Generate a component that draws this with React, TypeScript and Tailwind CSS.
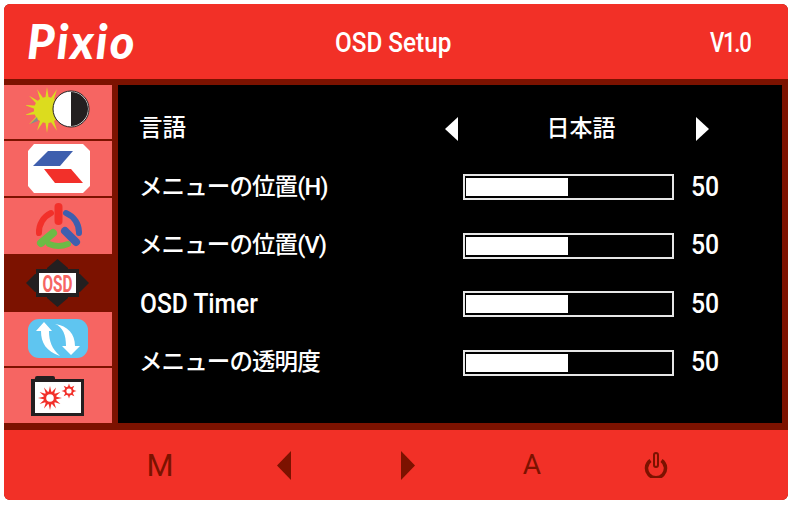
const font = { fontFamily: '"Roboto", "Noto Sans CJK JP", sans-serif' }

const rows = ["メニューの位置(H)", "メニューの位置(V)", "OSD Timer", "メニューの透明度"]

function Sun() {
  const rays = Array.from({ length: 14 }, (_, i) => i * (360 / 14))
  return (
    <svg width="64" height="50" viewBox="0 0 64 50">
      {rays.map((r) => (
        <polygon key={r} points="21,0 23,13 19,13" fill="#dcdc1e" transform={`rotate(${r} 21 23)`} />
      ))}
      <circle cx="21" cy="23" r="13" fill="#dcdc1e" />
      <polygon points="4,37 11,30 12,34" fill="#8a8a8a" />
      <circle cx="45" cy="22" r="18" fill="#fff" stroke="#231f20" strokeWidth="1" />
      <path d="M45 5a17 17 0 0 1 0 34z" fill="#231f20" />
    </svg>
  )
}

function Display() {
  return (
    <svg width="62" height="50" viewBox="0 0 62 50" className="ml-[2px]">
      <polygon points="6,0 55,0 62,7 62,42 55,49 6,49 0,42 0,7" fill="#fff" />
      <polygon points="5,22 20,7 45,7 32,22" fill="#3e5fae" />
      <polygon points="16,25 43,25 55,39 27,39" fill="#f2302a" />
    </svg>
  )
}

function ColorWheel() {
  return (
    <svg width="48" height="48" viewBox="0 0 48 48" fill="none" strokeLinecap="round">
      <path d="M5 31A21 21 0 0 1 17 11" stroke="#f2302a" strokeWidth="6" />
      <path d="M32 11A21 21 0 0 1 45 31" stroke="#3e5fae" strokeWidth="6" />
      <path d="M15 42A24 24 0 0 0 34 42" stroke="#6cbb45" strokeWidth="6" />
      <path d="M24.5 5V19" stroke="#f2302a" strokeWidth="8" />
      <path d="M7 41L19 31" stroke="#6cbb45" strokeWidth="8" />
      <path d="M31 29L42 40" stroke="#3e5fae" strokeWidth="8" />
    </svg>
  )
}

function Osd() {
  return (
    <svg width="64" height="48" viewBox="0 0 64 48">
      <polygon points="31.5,0 42,9 42,14 21,14 21,9" fill="#231f20" />
      <polygon points="31.5,48 42,39 42,34 21,34 21,39" fill="#231f20" />
      <polygon points="0,24 9,15 14,15 14,33 9,33" fill="#231f20" />
      <polygon points="63,24 54,15 49,15 49,33 54,33" fill="#231f20" />
      <rect x="10" y="10" width="43" height="28" fill="#231f20" />
      <rect x="13" y="14" width="37" height="20" fill="#fff" />
      <text x="31.5" y="32.5" textAnchor="middle" fontSize="23" fontWeight="700" fill="#f66562" textLength="30" lengthAdjust="spacingAndGlyphs" fontFamily="Roboto">OSD</text>
    </svg>
  )
}

function Refresh() {
  return (
    <svg width="60" height="40" viewBox="0 0 60 40">
      <rect width="60" height="39" rx="11" fill="#5fc5f0" />
      <path d="M13 12C13 24 18 32 32 37C24 30 21 22 21 12L24 12L16 3L8 12Z" fill="#fff" />
      <path d="M27 5C35 8 38 16 38 27L34 27L43 36L52 27L47 27C47 15 40 7 27 5Z" fill="#fff" />
    </svg>
  )
}

function Folder() {
  const big = [0, 30, 60, 90, 120, 150, 180, 210, 240, 270, 300, 330]
  const small = [0, 45, 90, 135, 180, 225, 270, 315]
  return (
    <svg width="54" height="42" viewBox="0 0 54 42">
      <path d="M3 7L4 3Q4 1 6 1H22Q24 1 24 3V7Z" fill="#231f20" />
      <rect y="4" width="53" height="37" fill="#231f20" />
      <rect x="4" y="7" width="46" height="31" fill="#fff" />
      <g fill="#f2302a">
        {big.map((r) => (
          <polygon key={r} points="19,11 21,20 17,20" transform={`rotate(${r} 19 23)`} />
        ))}
        {small.map((r) => (
          <polygon key={r} points="38,8.5 39.5,13 36.5,13" transform={`rotate(${r} 38 16)`} />
        ))}
      </g>
      <circle cx="19" cy="23" r="6.5" fill="#f2302a" />
      <circle cx="19" cy="23" r="3.8" fill="#fff" />
      <circle cx="38" cy="16" r="3.6" fill="#fff" stroke="#f2302a" strokeWidth="2" />
    </svg>
  )
}

function Tri({ dir, className }: { dir: "l" | "r"; className: string }) {
  return (
    <svg width="13" height="24" viewBox="0 0 13 24" className={className}>
      <polygon points={dir === "l" ? "13,0 13,24 0,12" : "0,0 0,24 13,12"} fill="currentColor" />
    </svg>
  )
}

function FootTri({ dir }: { dir: "l" | "r" }) {
  return (
    <svg width="14" height="29" viewBox="0 0 14 29">
      <polygon points={dir === "l" ? "14,0 14,29 0,14.5" : "0,0 0,29 14,14.5"} fill="currentColor" />
    </svg>
  )
}

function Slider() {
  return (
    <div className="flex items-center gap-[17px]">
      <div className="flex h-[26px] w-[211px] items-center border-2 border-[#e6e6e6] p-[1px]">
        <div className="h-[18px] w-[102px] bg-white" />
      </div>
      <span className="w-[27px] text-[27px] font-medium leading-none [transform-origin:left] [transform:scaleX(0.92)]">50</span>
    </div>
  )
}

export default function App() {
  return (
    <div className="h-[505px] w-[793px] bg-white p-1" style={font}>
      <div className="flex h-[496px] w-[784px] flex-col overflow-hidden rounded-md bg-[#7c1200]">
        <header className="flex h-[75px] shrink-0 items-center bg-[#f23027] pr-[37px] text-white">
          <span className="ml-[23px] w-[308px] text-[47px] font-black italic leading-none tracking-[2px]" style={{ fontFamily: "Lato, sans-serif" }}>Pixio</span>
          <span className="pt-[3px] text-[27px] font-medium leading-none [transform-origin:left] [transform:scaleX(0.9)]">OSD Setup</span>
          <span className="ml-auto pt-[3px] text-[27px] font-medium leading-none tracking-[-1.5px] [transform-origin:right] [transform:scaleX(0.82)]">V1.0</span>
        </header>

        <div className="flex h-[344px] shrink-0 gap-[6px] pt-[6px] pr-[6px]">
          <nav className="flex w-[108px] flex-col">
            <div className="flex h-[54px] items-center justify-center bg-[#f66562]"><Sun /></div>
            <div className="mt-[2px] flex h-[55px] items-center justify-center bg-[#f66562]"><Display /></div>
            <div className="mt-[2px] flex h-[56px] items-center justify-center bg-[#f66562]"><ColorWheel /></div>
            <div className="flex h-[58px] items-center justify-center"><Osd /></div>
            <div className="flex h-[54px] items-center justify-center bg-[#f66562]"><Refresh /></div>
            <div className="mt-[2px] flex h-[55px] items-center justify-center bg-[#f66562]"><Folder /></div>
          </nav>

          <main className="flex-1 bg-black pl-[21px] pr-[64px] pt-[15px] text-white">
            <div className="flex h-[58px] items-center justify-between">
              <span className="text-[23.5px] font-medium">言語</span>
              <div className="mr-[9px] flex w-[264px] items-center justify-between">
                <Tri dir="l" className="text-white" />
                <span className="pl-[8px] text-[23px] font-medium">日本語</span>
                <Tri dir="r" className="text-white" />
              </div>
            </div>
            {rows.map((r) => (
              <div key={r} className="flex h-[58.5px] items-center justify-between">
                <span className={r === "OSD Timer" ? "ml-[1px] text-[27px] font-medium leading-none [transform-origin:left] [transform:scaleX(0.91)]" : "text-[23.5px] font-medium tracking-[-0.9px]"}>{r}</span>
                <Slider />
              </div>
            ))}
          </main>
        </div>

        <footer className="mt-[7px] flex h-[70px] shrink-0 items-center bg-[#f23027] text-[#7c1200]">
          <div className="ml-[94px] grid w-[620px] grid-cols-5 items-center justify-items-center">
            <span className="text-[31px] leading-none">M</span>
            <FootTri dir="l" />
            <FootTri dir="r" />
            <span className="text-[28px] leading-none">A</span>
            <svg width="24" height="26" viewBox="0 0 24 26" fill="none" stroke="currentColor">
              <path d="M6.5 8.5A9.5 9.5 0 1 0 17.5 8.5" strokeWidth="3.5" />
              <rect x="10" y="1" width="4" height="14" rx="2" strokeWidth="2" />
            </svg>
          </div>
        </footer>
      </div>
    </div>
  )
}
